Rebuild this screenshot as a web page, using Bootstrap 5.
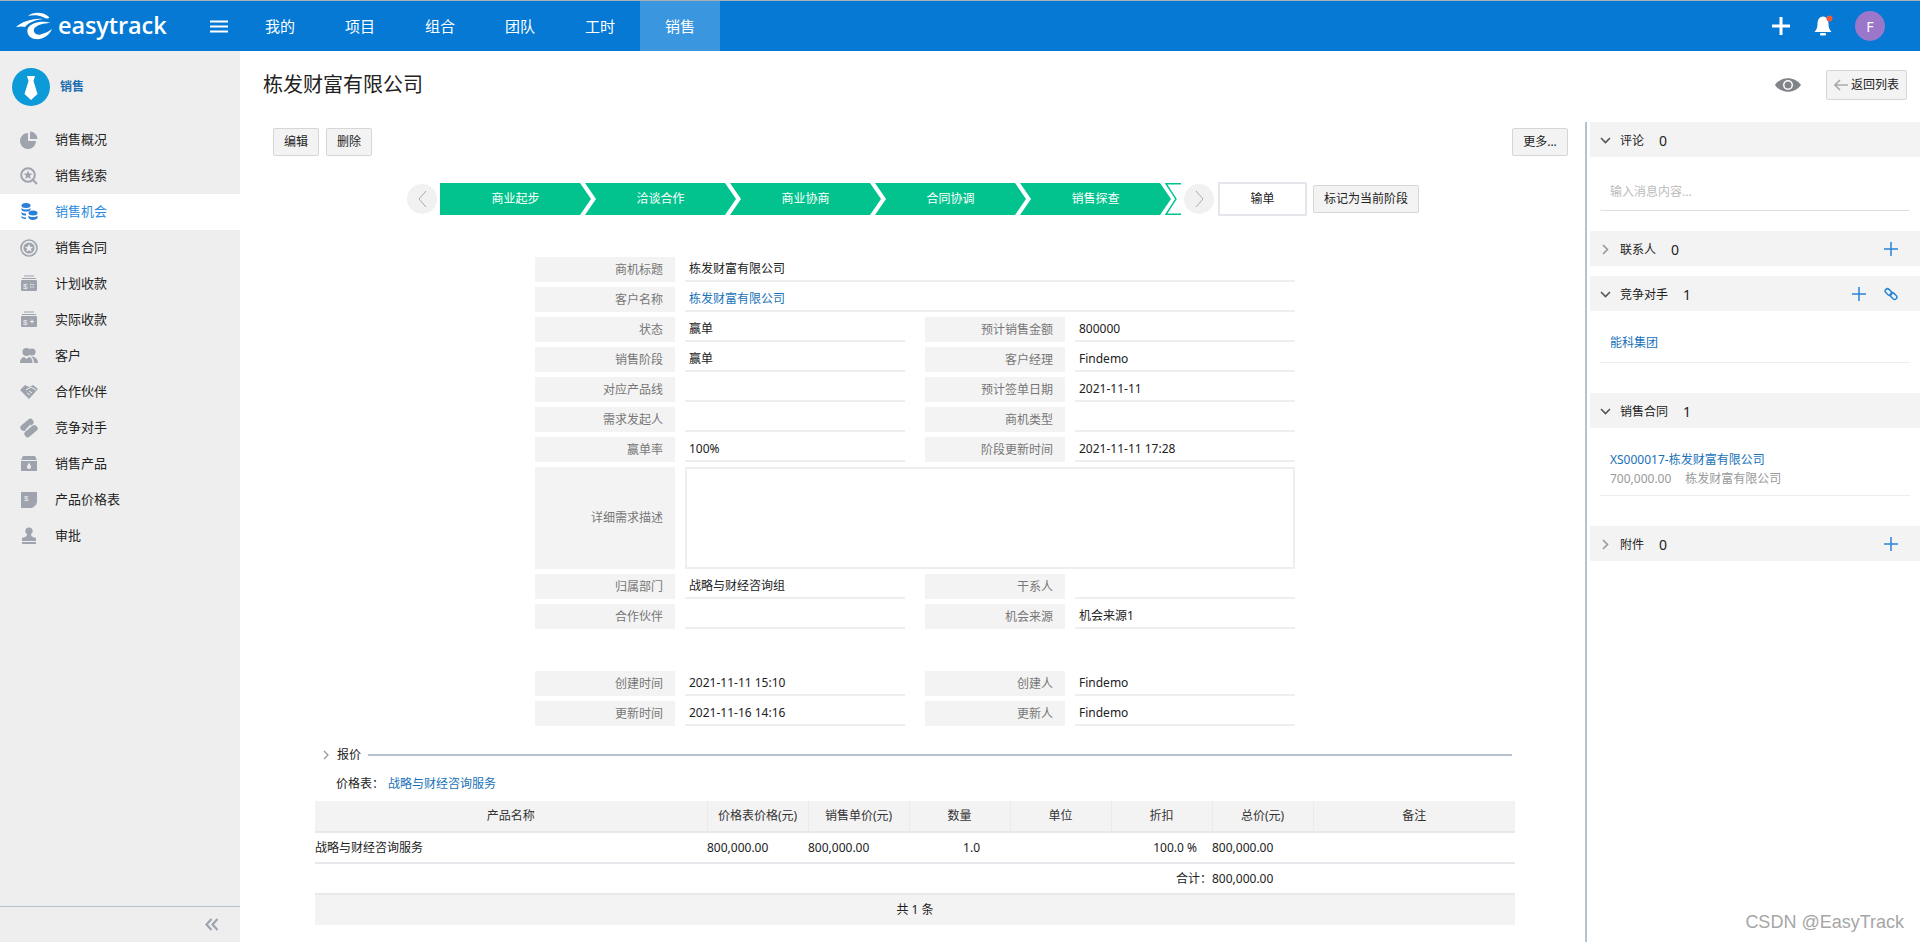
<!DOCTYPE html>
<html lang="zh">
<head>
<meta charset="utf-8">
<title>easytrack</title>
<link href="https://cdn.jsdelivr.net/npm/bootstrap@5.3.0/dist/css/bootstrap.min.css" rel="stylesheet">
<style>
html,body{height:942px;overflow:hidden}
body{font-family:"Noto Sans","Noto Sans CJK SC",sans-serif;font-size:12px;color:#222;background:#fff}
.et-top{height:51px;background:#0579d4;border-top:1px solid #a9b0b6;color:#fff}
.et-logo{width:201px;padding-left:16px;gap:5px}
.et-logotext{font-family:"Open Sans",sans-serif;font-weight:600;font-size:23.5px;letter-spacing:-.1px;line-height:1;color:#fff}
.et-burger{width:39px;padding-right:4px}
.et-tab{width:80px;height:50px;font-size:15px;color:#fff}
.et-tab.on{background:#3a96df}
.et-topicons{padding-right:35px}
.et-avatar{width:30px;height:30px;border-radius:50%;background:#9a77c9;color:#fff;font-size:14px;margin-left:21px}
.et-bell{margin-left:24px}
.et-wrap{height:891px}
.et-side{width:240px;background:#eee;flex:none}
.et-sidehead{height:71px;padding-left:12px;gap:10px;font-weight:700;color:#1c6eae}
.et-item{height:36px;font-size:13px;color:#222;gap:16px;padding-left:21px}
.et-item svg{width:20px;height:20px;flex:none;margin-left:-2px}
.et-item.on{background:#fff;color:#2a8be0}
.et-sidefoot{height:36px;border-top:1px solid #b3c1cd;padding-right:21px}
.et-main{min-width:0}
.et-titlebar{height:71px;padding-left:23px;padding-right:13px;padding-bottom:4px}
.et-title{font-size:20px;font-weight:400;color:#222;margin:0}
.et-btn{height:28px;width:46px;border:1px solid #d6d6d6;border-radius:2px;background:#f3f3f3;font-size:12px;color:#222;padding:0;line-height:1}
.et-more{width:56px}
.et-back{height:30px;width:81px;padding:0;gap:3px;margin-left:25px}
.et-under{min-height:0}
.et-left{padding:6px 17px 0 33px;min-width:0}
.et-tools{gap:7px}
.et-stepper{margin:26px 0 0 134px;height:34px}
.et-circle{width:30px;height:30px;border-radius:50%;background:#f1f1f1;flex:none}
.et-step{width:151px;height:32px;background:#02c38d;color:#fff;margin-left:-6px;flex:none;clip-path:polygon(0 0,140px 0,151px 50%,140px 100%,0 100%,11px 50%)}
.et-step.first{margin-left:3px;clip-path:polygon(0 0,140px 0,151px 50%,140px 100%,0 100%)}
.et-ghost{width:16px;height:32px;margin-left:-6px;flex:none}
.et-next{margin-left:3px}
.et-lost{width:89px;height:34px;border:2px solid #e5e6ec;margin-left:4px;flex:none}
.et-mark{width:106px;margin-left:6px;flex:none}
.et-form{width:760px;margin:41px 0 0 262px}
.et-row{height:25px;margin-bottom:5px}
.et-lab{width:140px;flex:none;background:#f3f3f3;color:#777;text-align:right;padding-right:12px;line-height:25px}
.et-lab.two{margin-left:20px}
.et-val{width:220px;flex:none;margin-left:10px;border-bottom:2px solid #eee;padding-left:4px;line-height:23px;height:25px}
.et-val.wide{width:610px}
.et-link{color:#1872b8;text-decoration:none}
.et-big{height:102px;margin-bottom:5px}
.et-big .et-lab{line-height:102px}
.et-area{width:610px;margin-left:10px;border:2px solid #eee;flex:none}
.et-gap{height:37px}
.et-sec{height:20px;margin:19px 0 0 50px;width:1189px}
.et-sec i{display:block;flex:1;height:2px;background:#b7c2cc;margin-left:7px}
.et-pl{margin:9px 0 0 63px;height:20px}
.et-pl .et-link{margin-left:4px}
.et-tablebox{margin:7px 0 0 42px;width:1200px}
table.et-q{table-layout:fixed;width:1200px;margin:0;border-collapse:collapse;font-size:12px}
table.et-q>*>*>*{padding:0;border:0;color:#222;background:transparent;box-shadow:none;height:30px;vertical-align:middle;font-weight:400}
table.et-q thead th{background:#f3f3f3;text-align:center;border-left:1px solid #ebebeb;height:31px;color:#333;border-bottom:2px solid #e8e8ec}
table.et-q thead th:first-child{border-left:0}
table.et-q tbody td{height:31px;border-bottom:2px solid #e8e8ec}
table.et-q tfoot td{height:31px;background:#f3f3f3;text-align:center}
table.et-q td.et-r1{text-align:right;padding-right:30px}
table.et-q td.et-r2{text-align:right;padding-right:15px}
.et-c1{width:392px}
.et-c2{width:101px}
.et-c3{width:202px}
.et-right{width:335px;flex:none;border-left:2px solid #b7c2cc;padding-left:3px}
.et-phead{height:35px;background:#f3f3f3;padding:0 22px 0 0}
.et-phead>span:not(.ch):not(.ac){padding-top:2px}
.et-phead .ch{width:30px;flex:none;text-align:center}
.et-phead .ct{font-size:14px;margin-left:15px;color:#222}
.et-phead .ac{margin-left:auto;gap:18px}
.et-pbody{padding:0 10px}
.et-input{height:54px;padding:26px 0 0 10px;color:#bbb;border-bottom:1px solid #ddd;border-radius:2px}
.et-pitem{padding-left:10px;border-bottom:1px solid #eee}
.et-mute{color:#999;gap:14px}
.et-h74{height:74px}
.et-h10{height:10px}
.et-h82{height:82px}
.et-h98{height:98px}
.et-h19{height:19px}
.et-i1{height:52px;padding-top:23px}
.et-i2{height:68px;padding-top:23px}
.et-water{position:absolute;right:16px;bottom:9px;font-family:"Liberation Sans",sans-serif;font-size:18px;color:#a6a6a6;line-height:1.1}
</style>
</head>
<body>
<header class="et-top d-flex align-items-center">
  <div class="et-logo d-flex align-items-center">
    <svg width="37" height="29" viewBox="0 0 37 29"><path d="M0 15C6 10 16 6 27 7 18 8 12 11 9 15 6 14 3 14.500 0 15Z" fill="#fff"/><path d="M12 4C18-1 28 0 33 5 34 7 30 7 27 5 22 3 17 3 12 4Z" fill="#fff"/><path d="M12 16C15 11 25 8 35 11 28 11 20 13 18 17 17 21 21 24 26 22 30 21 33 19 36 17 33 24 26 28 19 27 13 26 10 21 12 16Z" fill="#fff"/></svg>
    <span class="et-logotext">easytrack</span>
  </div>
  <div class="et-burger d-flex justify-content-center"><svg width="18" height="13" viewBox="0 0 18 13"><path d="M0 1.500H18M0 6.500H18M0 11.500H18" stroke="#fff" stroke-width="2"/></svg></div>
  <nav class="d-flex">
    <div class="et-tab d-flex align-items-center justify-content-center">我的</div>
    <div class="et-tab d-flex align-items-center justify-content-center">项目</div>
    <div class="et-tab d-flex align-items-center justify-content-center">组合</div>
    <div class="et-tab d-flex align-items-center justify-content-center">团队</div>
    <div class="et-tab d-flex align-items-center justify-content-center">工时</div>
    <div class="et-tab on d-flex align-items-center justify-content-center">销售</div>
  </nav>
  <div class="et-topicons ms-auto d-flex align-items-center">
    <svg width="18" height="18" viewBox="0 0 18 18"><path d="M9 0V18M0 9H18" stroke="#fff" stroke-width="3"/></svg>
    <svg class="et-bell" width="20" height="22" viewBox="0 0 20 22"><path d="M9 1.500C5 2 3.500 5 3.500 9 3.500 12 2.500 15 .5 17H17.500C15.500 15 14.500 12 14.500 9 14.500 5 13 2 9 1.500Z" fill="#fff"/><rect x="6" y="18" width="6" height="2.500" rx="1" fill="#fff"/><circle cx="15.500" cy="3.500" r="3" fill="#f4583a"/></svg>
    <div class="et-avatar d-flex align-items-center justify-content-center">F</div>
  </div>
</header>
<div class="et-wrap d-flex">
  <aside class="et-side d-flex flex-column">
    <div class="et-sidehead d-flex align-items-center">
      <svg width="38" height="38" viewBox="0 0 38 38"><circle cx="19" cy="19" r="19" fill="#0d9ad9"/><path d="M15 8H23L21.500 13 25.500 26 19 32 12.500 26 16.500 13Z" fill="#fff"/></svg>
      <span>销售</span>
    </div>
    <div class="et-item d-flex align-items-center"><svg viewBox="0 0 20 20"><path d="M9 3A8 8 0 1 0 17 11H9Z" fill="#9ea3ae"/><path d="M11 1.500A7.500 7.500 0 0 1 18.500 9H11Z" fill="#9ea3ae"/></svg>销售概况</div>
    <div class="et-item d-flex align-items-center"><svg viewBox="0 0 20 20"><circle cx="9" cy="9" r="6.800" fill="none" stroke="#9ea3ae" stroke-width="2"/><path d="M9 4.500L10.300 7.500 13.400 7.700 11 9.800 11.800 13 9 11.300 6.200 13 7 9.800 4.600 7.700 7.700 7.500Z" fill="#9ea3ae"/><path d="M14 14L18 18" stroke="#9ea3ae" stroke-width="2"/></svg>销售线索</div>
    <div class="et-item on d-flex align-items-center"><svg viewBox="0 0 20 20"><g fill="#2a7fd9"><ellipse cx="7" cy="3.500" rx="4.500" ry="2.500"/><path d="M2.500 6C4 8 10 8 11.500 6V8C10 10 4 10 2.500 8Z"/><path d="M2.500 10C3.500 11 5 11.500 7 11.500V13.500C5 13.500 3.500 13 2.500 12Z"/><path d="M2.500 14C3.500 15 5 15.500 7 15.500V17C5 17 3.500 16.500 2.500 16Z"/><ellipse cx="14" cy="11" rx="4.500" ry="2.500"/><path d="M9.500 13.500C11 15.500 17 15.500 18.500 13.500V16C17 18.500 11 18.500 9.500 16Z"/></g></svg>销售机会</div>
    <div class="et-item d-flex align-items-center"><svg viewBox="0 0 20 20"><circle cx="10" cy="10" r="8" fill="none" stroke="#9ea3ae" stroke-width="1.600"/><circle cx="10" cy="10" r="5.600" fill="#9ea3ae"/><path d="M10 5.800L11.200 8.700 14.200 8.900 11.900 10.800 12.700 13.800 10 12.200 7.300 13.800 8.100 10.800 5.800 8.900 8.800 8.700Z" fill="#eee"/></svg>销售合同</div>
    <div class="et-item d-flex align-items-center"><svg viewBox="0 0 20 20"><path d="M5 2H15M3 4.500H17" stroke="#9ea3ae"/><rect x="2" y="6" width="16" height="11" rx="1" fill="#9ea3ae"/><text x="4" y="15" font-size="8" fill="#eee" font-family="Liberation Sans">$</text><path d="M11 10.500H15M11 13H15" stroke="#eee" stroke-dasharray="1.500 1"/></svg>计划收款</div>
    <div class="et-item d-flex align-items-center"><svg viewBox="0 0 20 20"><path d="M5 2H15M3 4.500H17" stroke="#9ea3ae"/><rect x="2" y="6" width="16" height="11" rx="1" fill="#9ea3ae"/><text x="4" y="15" font-size="8" fill="#eee" font-family="Liberation Sans">$</text><path d="M11 11.500H15M13 9.500V13.500" stroke="#eee"/></svg>实际收款</div>
    <div class="et-item d-flex align-items-center"><svg viewBox="0 0 20 20"><g fill="#9ea3ae"><circle cx="7.500" cy="6" r="4"/><path d="M1 17C1 13 3 11.500 5 11L7.500 13 10 11C12 11.500 13.500 13 13.500 17Z"/><circle cx="13" cy="6" r="3.500"/><path d="M12 10.500C15 10.500 19 12 19 17H15C15 14 14 12 12 10.500Z"/></g></svg>客户</div>
    <div class="et-item d-flex align-items-center"><svg viewBox="0 0 20 20"><path d="M1 8L6 3 10 5 14 3 19 7 10 17Z" fill="#9ea3ae"/><path d="M7 8L12 5 17 8M8 11L11 13M10 9L13 11" stroke="#eee" fill="none"/></svg>合作伙伴</div>
    <div class="et-item d-flex align-items-center"><svg viewBox="0 0 20 20"><g transform="rotate(-40 10 10)"><rect x="3" y="3" width="15" height="6.500" rx="3" fill="#9ea3ae"/><rect x="2" y="10.500" width="15" height="6.500" rx="3" fill="#9ea3ae"/></g><path d="M7 12L12 7" stroke="#eee" stroke-width="1.200"/></svg>竞争对手</div>
    <div class="et-item d-flex align-items-center"><svg viewBox="0 0 20 20"><path d="M4 2H16L18 6H2Z" fill="#9ea3ae"/><rect x="2" y="7" width="16" height="10" fill="#9ea3ae"/><path d="M10 8.500C11 11 12 11.500 12 13A2 2 0 0 1 8 13C8 11.500 9 11 10 8.500Z" fill="#eee"/></svg>销售产品</div>
    <div class="et-item d-flex align-items-center"><svg viewBox="0 0 20 20"><path d="M2 2H18V13L13 18H2Z" fill="#9ea3ae"/><path d="M14 18V14H18Z" fill="#9ea3ae" opacity=".7"/><text x="5" y="11" font-size="8" fill="#eee" font-family="Liberation Sans">$</text></svg>产品价格表</div>
    <div class="et-item d-flex align-items-center"><svg viewBox="0 0 20 20"><g fill="#9ea3ae"><path d="M10 1.500A3.500 3.500 0 0 1 12 8C12 10 13 11 17 12V15H3V12C7 11 8 10 8 8A3.500 3.500 0 0 1 10 1.500Z"/><rect x="3" y="16" width="14" height="2"/></g></svg>审批</div>
    <div class="et-sidefoot mt-auto d-flex align-items-center justify-content-end"><svg width="14" height="13" viewBox="0 0 14 13"><path d="M6.500 1L1.500 6.500 6.500 12M12.500 1L7.500 6.500 12.500 12" fill="none" stroke="#9ea3ae" stroke-width="2.200"/></svg></div>
  </aside>
  <div class="et-main flex-grow-1 d-flex flex-column">
    <div class="et-titlebar d-flex align-items-center">
      <h1 class="et-title">栋发财富有限公司</h1>
      <svg class="ms-auto" width="26" height="16" viewBox="0 0 26 16"><path d="M0 8C6-1 20-1 26 8 20 17 6 17 0 8Z" fill="#808388"/><circle cx="13" cy="8" r="5" fill="#fff"/><circle cx="13" cy="8" r="3.500" fill="#808388"/></svg>
      <button class="et-btn et-back d-flex align-items-center justify-content-center"><svg width="14" height="12" viewBox="0 0 14 12"><path d="M6 1L1 6 6 11M1 6H14" fill="none" stroke="#aaa" stroke-width="1.600"/></svg>返回列表</button>
    </div>
    <div class="d-flex flex-grow-1 et-under">
      <div class="et-left flex-grow-1">
        <div class="et-tools d-flex">
          <button class="et-btn">编辑</button><button class="et-btn">删除</button>
          <button class="et-btn et-more ms-auto">更多...</button>
        </div>
        <div class="et-stepper d-flex align-items-center">
          <div class="et-circle d-flex align-items-center justify-content-center"><svg width="9" height="18" viewBox="0 0 9 18"><path d="M8 1L1 9 8 17" fill="none" stroke="#aaa"/></svg></div>
          <div class="et-step first d-flex align-items-center justify-content-center">商业起步</div>
          <div class="et-step d-flex align-items-center justify-content-center">洽谈合作</div>
          <div class="et-step d-flex align-items-center justify-content-center">商业协商</div>
          <div class="et-step d-flex align-items-center justify-content-center">合同协调</div>
          <div class="et-step d-flex align-items-center justify-content-center">销售探查</div>
          <svg class="et-ghost" viewBox="0 0 16 32"><path d="M16 .7H1L11 16 1 31.300H16" fill="none" stroke="#02c38d" stroke-width="1.400"/></svg>
          <div class="et-circle et-next d-flex align-items-center justify-content-center"><svg width="9" height="18" viewBox="0 0 9 18"><path d="M1 1L8 9 1 17" fill="none" stroke="#aaa"/></svg></div>
          <div class="et-lost d-flex align-items-center justify-content-center">输单</div>
          <button class="et-btn et-mark">标记为当前阶段</button>
        </div>
        <div class="et-form">
          <div class="et-row d-flex"><div class="et-lab">商机标题</div><div class="et-val wide">栋发财富有限公司</div></div>
          <div class="et-row d-flex"><div class="et-lab">客户名称</div><div class="et-val wide"><a class="et-link" href="#">栋发财富有限公司</a></div></div>
          <div class="et-row d-flex"><div class="et-lab">状态</div><div class="et-val">赢单</div><div class="et-lab two">预计销售金额</div><div class="et-val">800000</div></div>
          <div class="et-row d-flex"><div class="et-lab">销售阶段</div><div class="et-val">赢单</div><div class="et-lab two">客户经理</div><div class="et-val">Findemo</div></div>
          <div class="et-row d-flex"><div class="et-lab">对应产品线</div><div class="et-val"></div><div class="et-lab two">预计签单日期</div><div class="et-val">2021-11-11</div></div>
          <div class="et-row d-flex"><div class="et-lab">需求发起人</div><div class="et-val"></div><div class="et-lab two">商机类型</div><div class="et-val"></div></div>
          <div class="et-row d-flex"><div class="et-lab">赢单率</div><div class="et-val">100%</div><div class="et-lab two">阶段更新时间</div><div class="et-val">2021-11-11 17:28</div></div>
          <div class="et-big d-flex"><div class="et-lab">详细需求描述</div><div class="et-area"></div></div>
          <div class="et-row d-flex"><div class="et-lab">归属部门</div><div class="et-val">战略与财经咨询组</div><div class="et-lab two">干系人</div><div class="et-val"></div></div>
          <div class="et-row d-flex"><div class="et-lab">合作伙伴</div><div class="et-val"></div><div class="et-lab two">机会来源</div><div class="et-val">机会来源1</div></div>
          <div class="et-gap"></div>
          <div class="et-row d-flex"><div class="et-lab">创建时间</div><div class="et-val">2021-11-11 15:10</div><div class="et-lab two">创建人</div><div class="et-val">Findemo</div></div>
          <div class="et-row d-flex"><div class="et-lab">更新时间</div><div class="et-val">2021-11-16 14:16</div><div class="et-lab two">更新人</div><div class="et-val">Findemo</div></div>
        </div>
        <div class="et-sec d-flex align-items-center">
          <svg class="me-2" width="6" height="10" viewBox="0 0 6 10"><path d="M1 1L5 5 1 9" fill="none" stroke="#999" stroke-width="1.300"/></svg>
          <span>报价</span><i></i>
        </div>
        <div class="et-pl d-flex align-items-center"><span>价格表：</span><a class="et-link" href="#">战略与财经咨询服务</a></div>
        <div class="et-tablebox">
          <table class="table et-q">
            <colgroup><col class="et-c1"><col class="et-c2"><col class="et-c2"><col class="et-c2"><col class="et-c2"><col class="et-c2"><col class="et-c2"><col class="et-c3"></colgroup>
            <thead><tr><th>产品名称</th><th>价格表价格(元)</th><th>销售单价(元)</th><th>数量</th><th>单位</th><th>折扣</th><th>总价(元)</th><th>备注</th></tr></thead>
            <tbody>
              <tr><td>战略与财经咨询服务</td><td>800,000.00</td><td>800,000.00</td><td class="et-r1">1.0</td><td></td><td class="et-r2">100.0 %</td><td>800,000.00</td><td></td></tr>
              <tr><td colspan="6" class="text-end">合计：</td><td>800,000.00</td><td></td></tr>
            </tbody>
            <tfoot><tr><td colspan="8">共 1 条</td></tr></tfoot>
          </table>
        </div>
      </div>
      <aside class="et-right">
        <div class="et-phead d-flex align-items-center"><span class="ch"><svg width="11" height="7" viewBox="0 0 11 7"><path d="M1 1L5.500 5.500 10 1" fill="none" stroke="#555" stroke-width="1.600"/></svg></span><span>评论</span><span class="ct">0</span></div>
        <div class="et-pbody et-h74"><div class="et-input">输入消息内容...</div></div>
        <div class="et-phead d-flex align-items-center"><span class="ch"><svg width="7" height="11" viewBox="0 0 7 11"><path d="M1 1L5.500 5.500 1 10" fill="none" stroke="#999" stroke-width="1.600"/></svg></span><span>联系人</span><span class="ct">0</span><span class="ac d-flex"><svg width="14" height="14" viewBox="0 0 14 14"><path d="M7 0V14M0 7H14" stroke="#2a85d8" stroke-width="1.500"/></svg></span></div>
        <div class="et-h10"></div>
        <div class="et-phead d-flex align-items-center"><span class="ch"><svg width="11" height="7" viewBox="0 0 11 7"><path d="M1 1L5.500 5.500 10 1" fill="none" stroke="#555" stroke-width="1.600"/></svg></span><span>竞争对手</span><span class="ct">1</span><span class="ac d-flex align-items-center"><svg width="14" height="14" viewBox="0 0 14 14"><path d="M7 0V14M0 7H14" stroke="#2a85d8" stroke-width="1.500"/></svg><svg width="14" height="14" viewBox="0 0 14 14"><g fill="none" stroke="#2a85d8" stroke-width="1.500"><rect x=".8" y="2.800" width="7.500" height="4.500" rx="2.200" transform="rotate(45 4.500 5)"/><rect x="5.800" y="6.800" width="7.500" height="4.500" rx="2.200" transform="rotate(45 9.500 9)"/></g></svg></span></div>
        <div class="et-pbody et-h82"><div class="et-pitem et-i1"><a class="et-link" href="#">能科集团</a></div></div>
        <div class="et-phead d-flex align-items-center"><span class="ch"><svg width="11" height="7" viewBox="0 0 11 7"><path d="M1 1L5.500 5.500 10 1" fill="none" stroke="#555" stroke-width="1.600"/></svg></span><span>销售合同</span><span class="ct">1</span></div>
        <div class="et-pbody et-h98"><div class="et-pitem et-i2"><div class="et-h19"><a class="et-link" href="#">XS000017-栋发财富有限公司</a></div><div class="et-mute d-flex"><span>700,000.00</span><span>栋发财富有限公司</span></div></div></div>
        <div class="et-phead d-flex align-items-center"><span class="ch"><svg width="7" height="11" viewBox="0 0 7 11"><path d="M1 1L5.500 5.500 1 10" fill="none" stroke="#999" stroke-width="1.600"/></svg></span><span>附件</span><span class="ct">0</span><span class="ac d-flex"><svg width="14" height="14" viewBox="0 0 14 14"><path d="M7 0V14M0 7H14" stroke="#2a85d8" stroke-width="1.500"/></svg></span></div>
      </aside>
    </div>
  </div>
</div>
<div class="et-water">CSDN @EasyTrack</div>
<script src="https://cdn.jsdelivr.net/npm/bootstrap@5.3.0/dist/js/bootstrap.bundle.min.js"></script>
</body>
</html>
